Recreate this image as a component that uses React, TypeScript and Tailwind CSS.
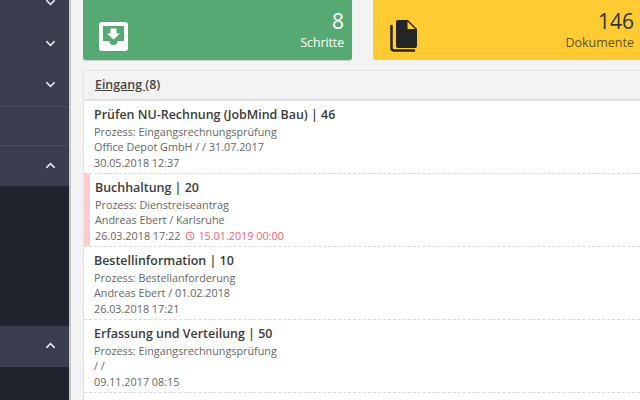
import { ChevronDown, ChevronUp } from "lucide-react"

const items = [
  { title: "Prüfen NU-Rechnung (JobMind Bau) | 46", process: "Prozess: Eingangsrechnungsprüfung", meta: "Office Depot GmbH / / 31.07.2017", date: "30.05.2018 12:37" },
  { title: "Buchhaltung | 20", process: "Prozess: Dienstreiseantrag", meta: "Andreas Ebert / Karlsruhe", date: "26.03.2018 17:22", due: "15.01.2019 00:00" },
  { title: "Bestellinformation | 10", process: "Prozess: Bestellanforderung", meta: "Andreas Ebert / 01.02.2018", date: "26.03.2018 17:21" },
  { title: "Erfassung und Verteilung | 50", process: "Prozess: Eingangsrechnungsprüfung", meta: "/ /", date: "09.11.2017 08:15" },
]

function Sidebar() {
  return (
    <div className="w-[69px] shrink-0 flex flex-col border-r-2 border-[#c9cacc] bg-[#21242e] box-content">
      <div className="h-[107px] bg-[#3a3d4d] border-b border-[#4b4e5c] flex flex-col items-center pl-[31px]">
        <ChevronDown size={15} strokeWidth={2.5} className="text-[#e4e4e8] -mt-[5px]" />
        <ChevronDown size={15} strokeWidth={2.5} className="text-[#e4e4e8] mt-[26px]" />
        <ChevronDown size={15} strokeWidth={2.5} className="text-[#e4e4e8] mt-[26px]" />
      </div>
      <div className="h-[39px] bg-[#3a3d4d] border-b border-[#4b4e5c]" />
      <div className="h-[40px] bg-[#3a3d4d] flex items-center justify-center pl-[31px] pb-[2px]">
        <ChevronUp size={15} strokeWidth={2.5} className="text-[#e4e4e8]" />
      </div>
      <div className="h-[140px] bg-[#21242e]" />
      <div className="h-[41px] bg-[#3a3d4d] flex items-center justify-center pl-[31px] pb-[2px]">
        <ChevronUp size={15} strokeWidth={2.5} className="text-[#e4e4e8]" />
      </div>
      <div className="flex-1 bg-[#21242e]" />
    </div>
  )
}

function InboxIcon() {
  return (
    <svg width="29" height="29" viewBox="0 0 29 29">
      <rect x="0" y="0" width="29" height="29" rx="3" fill="#fff" />
      <path d="M4 4h21v15h-6.500a4 4 0 0 1-8 0H4z" fill="#57a973" />
      <path d="M11.500 6.500h6v5h3.500l-6.500 6-6.500-6h3.500z" fill="#fff" />
    </svg>
  )
}

function FilesIcon() {
  return (
    <svg width="27" height="32" viewBox="0 0 27 32">
      <path d="M8 0h10l9 9v17a2 2 0 0 1-2 2H8a2 2 0 0 1-2-2V2a2 2 0 0 1 2-2z" fill="#252525" />
      <path d="M17.500 1.500v7.500h7.500z" fill="#ffcb33" />
      <path d="M1.500 6v22a2.500 2.500 0 0 0 2.500 2.500H24" fill="none" stroke="#252525" strokeWidth={2.5} strokeLinecap="round" />
    </svg>
  )
}

export default function App() {
  return (
    <div className="h-[400px] w-[640px] overflow-hidden flex bg-[#f3f3f3] font-['Open_Sans',sans-serif]">
      <Sidebar />
      <div className="flex-1 min-w-0 pl-3 flex flex-col">
        <div className="flex gap-[21px] shrink-0 h-[60px]">
          <div className="w-[269px] bg-[#57a973] rounded-b-[3px] shadow-[0_1px_1px_rgba(0,0,0,0.15)] flex items-end justify-between pl-[16px] pr-2 pb-[9px] text-white">
            <InboxIcon />
            <div className="text-right -mb-[1px]">
              <div className="text-[21px] leading-[26px]">8</div>
              <div className="text-[12.2px] leading-[18px]">Schritte</div>
            </div>
          </div>
          <div className="flex-1 bg-[#ffcb33] rounded-bl-[3px] flex items-end justify-between pl-[17px] pr-[6px] pb-[8px] text-[#333]">
            <FilesIcon />
            <div className="text-right">
              <div className="text-[21px] leading-[26px]">146</div>
              <div className="text-[12.5px] leading-[18px] text-[#5f5427]">Dokumente</div>
            </div>
          </div>
        </div>
        <div className="mt-[10px] flex-1 border-l border-t border-[#e2e2e2] rounded-tl-[3px] bg-white">
          <div className="h-[30px] bg-[#f3f3f3] border-b-2 border-[#e2e2e2] pl-[11px] text-[12.4px] leading-[27px] text-[#444] font-semibold">
            <span className="underline">Eingang </span>(8)
          </div>
          {items.map((it) => (
            <div key={it.title} className="h-[73px] border-b border-dashed border-[#d9d9d9] flex">
              {it.due && <div className="w-[6px] bg-[#ffcccc] shrink-0" />}
              <div className={it.due ? "pl-[5px] pt-[5px]" : "pl-[10px] pt-[5px]"}>
                <div className="text-[12.45px] leading-[17px] font-semibold text-[#3a3a3a]">{it.title}</div>
                <div className="text-[10.8px] leading-[15px] mt-[1px] text-[#666]">{it.process}</div>
                <div className="text-[10.8px] leading-[15px] text-[#666]">{it.meta}</div>
                <div className="text-[10.8px] leading-[15px] mt-[1px] text-[#666] flex items-center">
                  {it.date}
                  {it.due && (
                    <span className="flex items-center text-[#f8606e] ml-[5px]">
                      <svg width="10" height="10" viewBox="0 0 10 10" className="mr-[3px]">
                        <circle cx="5" cy="5" r="4" fill="none" stroke="#f8606e" strokeWidth="1" />
                        <path d="M5 2.500V5.300L7 6.300" fill="none" stroke="#f8606e" strokeWidth="1" />
                      </svg>
                      {it.due}
                    </span>
                  )}
                </div>
              </div>
            </div>
          ))}
        </div>
      </div>
    </div>
  )
}
